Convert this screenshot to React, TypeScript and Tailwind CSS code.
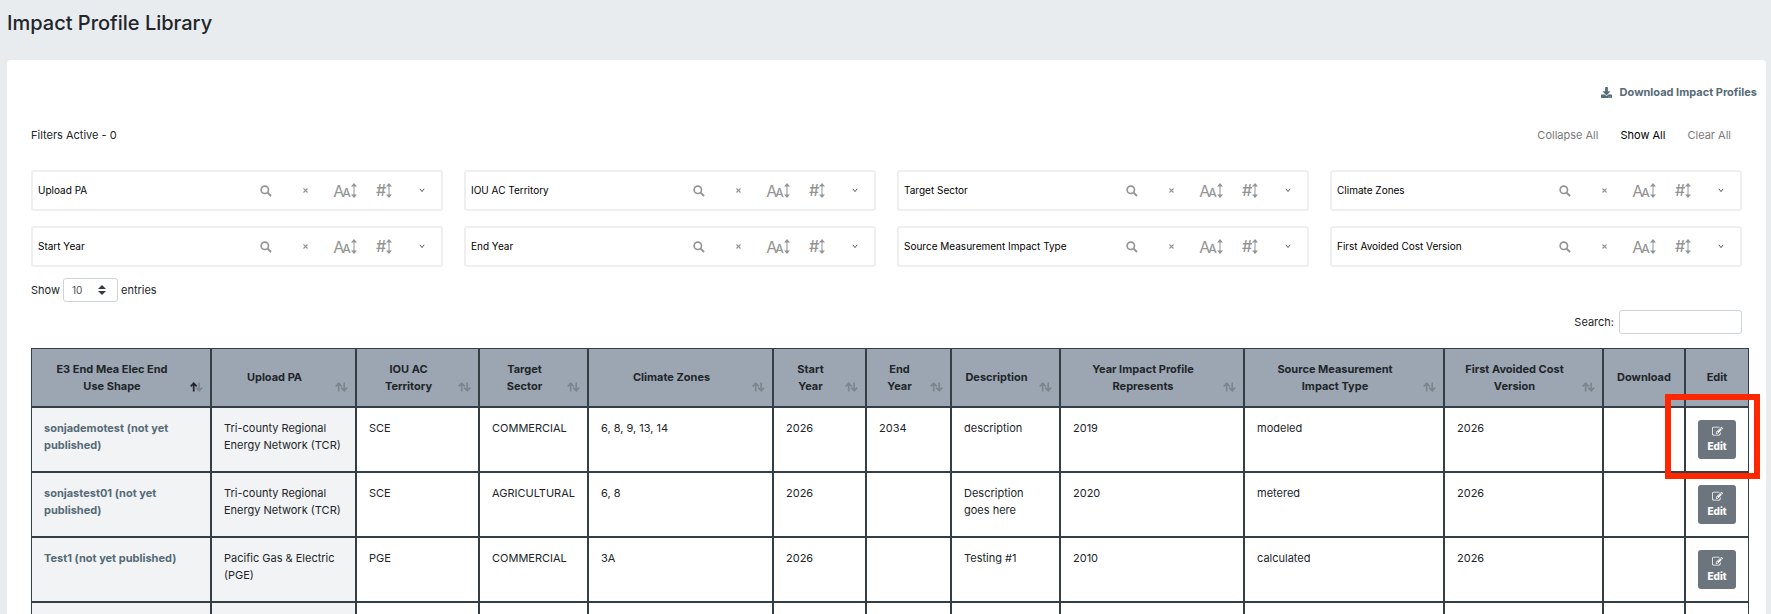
import React, { useState } from "react";
import { FaDownload } from "react-icons/fa";

const filters = [
    "Upload PA",
    "IOU AC Territory",
    "Target Sector",
    "Climate Zones",
    "Start Year",
    "End Year",
    "Source Measurement Impact Type",
    "First Avoided Cost Version",
]

const columns = [
    { label: "E3 End Mea Elec End\nUse Shape", width: "w-[180px]", sort: "asc" },
    { label: "Upload PA", width: "w-[145px]", sort: "none" },
    { label: "IOU AC\nTerritory", width: "w-[123px]", sort: "none" },
    { label: "Target\nSector", width: "w-[109px]", sort: "none" },
    { label: "Climate Zones", width: "w-[185px]", sort: "none" },
    { label: "Start\nYear", width: "w-[93px]", sort: "none" },
    { label: "End\nYear", width: "w-[85px]", sort: "none" },
    { label: "Description", width: "w-[109px]", sort: "none" },
    { label: "Year Impact Profile\nRepresents", width: "w-[184px]", sort: "none" },
    { label: "Source Measurement\nImpact Type", width: "w-[200px]", sort: "none" },
    { label: "First Avoided Cost\nVersion", width: "w-[159px]", sort: "none" },
    { label: "Download", width: "w-[82px]", sort: "" },
    { label: "Edit", width: "w-[64px]", sort: "" },
]

const profiles = [
    { name: "sonjademotest (not yet published)", cells: [ "Tri-county Regional Energy Network (TCR)", "SCE", "COMMERCIAL", "6, 8, 9, 13, 14", "2026", "2034", "description", "2019", "modeled", "2026", "" ] },
    { name: "sonjastest01 (not yet published)", cells: [ "Tri-county Regional Energy Network (TCR)", "SCE", "AGRICULTURAL", "6, 8", "2026", "", "Description goes here", "2020", "metered", "2026", "" ] },
    { name: "Test1 (not yet published)", cells: [ "Pacific Gas & Electric (PGE)", "PGE", "COMMERCIAL", "3A", "2026", "", "Testing #1", "2010", "calculated", "2026", "" ] },
    { name: "", cells: [ "", "", "", "", "", "", "", "", "", "", "" ] },
]

const UpDownIcon = () => (
    <svg width="6" height="15" viewBox="0 0 6 15" fill="#949494" aria-hidden="true">
        <path d="M3 0L6 3.5H0zM3 15L0 11.5h6z" />
        <path d="M2.5 3h1v9h-1z" />
    </svg>
)

const SortIcon = ( { sort }: { sort: string } ) => (
    <svg className="absolute right-[7px] bottom-3.5" width="13" height="10" viewBox="0 0 13 10" fill="none" strokeWidth="1.7" aria-hidden="true">
        <path d="M9.2 0.5v8.2M6.2 5.7l3 3 3-3" stroke="#7b868f" />
        <path d="M3.7 9.5V1.3M0.7 4.3l3-3 3 3" stroke={ sort === "asc" ? "#212529" : "#7b868f" } />
    </svg>
)

const EditIcon = () => (
    <svg width="11" height="11" viewBox="0 0 1792 1792" fill="currentColor" aria-hidden="true">
        <path d="M888 1184l116-116-152-152-116 116v56h96v96h56zm440-720q-16-16-33 1l-350 350q-17 17-1 33t33-1l350-350q17-17 1-33zm80 594v190q0 119-84.5 203.5t-203.5 84.5h-832q-119 0-203.5-84.5t-84.5-203.5v-832q0-119 84.5-203.5t203.5-84.5h832q63 0 117 25 15 7 18 23 3 17-9 29l-49 49q-14 14-32 8-23-6-45-6h-832q-66 0-113 47t-47 113v832q0 66 47 113t113 47h832q66 0 113-47t47-113v-126q0-13 9-22l64-64q15-15 35-7t20 29zm-96-738l288 288-672 672h-288v-288zm444 132l-92 92-288-288 92-92q28-28 68-28t68 28l152 152q28 28 28 68t-28 68z" />
    </svg>
)

const FilterPane = ( { label }: { label: string } ) => (
    <div className="flex h-[41px] items-center rounded-[3px] border-2 border-[#efefef] text-[#949494]">
        <span className="min-w-0 flex-1 truncate pl-[5px] text-[10px] text-black">{ label }</span>
        <button type="button" aria-label={ "Search " + label } className="flex w-[38px] justify-center">
            <svg width="12" height="12" viewBox="0 0 12 12" fill="none" stroke="currentColor" aria-hidden="true">
                <circle cx="4.8" cy="4.8" r="3.7" strokeWidth="1.6" />
                <path d="M7.6 7.6l3.4 3.4" strokeWidth="2" />
            </svg>
        </button>
        <button type="button" aria-label={ "Clear " + label } className="flex w-10 justify-center">
            <svg width="5" height="5" viewBox="0 0 5 5" stroke="currentColor" strokeWidth="1.1" aria-hidden="true">
                <path d="M0.5 0.5l4 4M4.5 0.5l-4 4" />
            </svg>
        </button>
        <button type="button" aria-label={ "Sort " + label + " by name" } className="flex w-10 items-center justify-center">
            <span className="text-[16px] leading-4">A</span>
            <span className="-ml-0.5 pt-1 text-[12px] leading-3 font-medium">A</span>
            <UpDownIcon />
        </button>
        <button type="button" aria-label={ "Sort " + label + " by count" } className="flex w-[38px] items-center justify-center">
            <span className="pb-0.5 text-[16px] leading-4 font-medium">#</span>
            <UpDownIcon />
        </button>
        <button type="button" aria-label={ "Expand " + label } className="flex w-[38px] justify-center">
            <svg width="6" height="5" viewBox="0 0 6 5" fill="none" stroke="#555" strokeWidth="1" aria-hidden="true">
                <path d="M0.8 0.8L3 3.6 5.2 0.8" />
            </svg>
        </button>
    </div>
)

const App = () =>
{
    const [ length, setLength ] = useState( "10" )
    const [ search, setSearch ] = useState( "" )

    return (
        <div className="h-screen overflow-hidden bg-[#e8ecef] pr-[5px] pl-[7px] font-['Inter',sans-serif] text-[11px] leading-[17px] text-[#212529]">
            <h1 className="h-[60px] pt-[9px] text-[20px] leading-7 font-medium">Impact Profile Library</h1>
            <main className="rounded-t-[4px] bg-white pt-6">
                <div className="flex justify-end pr-[9px]">
                    <a href="#download" className="flex items-center gap-2 font-bold text-[#566b78]">
                        <FaDownload className="size-[11px]" />
                        Download Impact Profiles
                    </a>
                </div>
                <div className="px-6">
                    <div className="flex items-center justify-between pt-[25px]">
                        <span>Filters Active - 0</span>
                        <div className="flex gap-[22px] pt-px pr-[11px] text-[#7a7a7a]">
                            <button type="button">Collapse All</button>
                            <button type="button" className="text-black">Show All</button>
                            <button type="button">Clear All</button>
                        </div>
                    </div>
                    <div className="grid grid-cols-4 gap-x-[21px] gap-y-[15px] pt-[26px]">
                        { filters.map( label => <FilterPane key={ label } label={ label } /> ) }
                    </div>
                    <div className="flex items-center gap-[3px] pt-[11px]">
                        <label htmlFor="length">Show</label>
                        <div className="relative">
                            <select id="length" value={ length } onChange={ ( e ) => setLength( e.target.value ) } className="block h-6 w-[55px] appearance-none rounded-[3px] border border-[#ced4da] bg-white pl-2 text-[10px] text-[#495057]">
                                <option>10</option>
                                <option>25</option>
                                <option>50</option>
                            </select>
                            <svg className="pointer-events-none absolute top-[7px] right-3" width="8" height="10" viewBox="0 0 4 5" fill="#343a40" aria-hidden="true">
                                <path d="M2 0L0 2h4zm0 5L0 3h4z" />
                            </svg>
                        </div>
                        <span>entries</span>
                    </div>
                    <div className="flex items-center justify-end gap-[5px] pt-2">
                        <label htmlFor="search">Search:</label>
                        <input id="search" type="search" value={ search } onChange={ ( e ) => setSearch( e.target.value ) } className="h-6 w-[123px] rounded-[3px] border border-[#ced4da] px-2" />
                    </div>
                </div>
                <div className="pt-3.5 pr-[17px] pl-6">
                    <table className="w-full table-fixed border-separate border-spacing-0">
                        <thead>
                            <tr>
                                { columns.map( col => (
                                    <th key={ col.label } className={ `relative h-[59px] border border-[#343f45] bg-[#9ba6b2] py-0 pl-3 text-center align-middle font-bold whitespace-pre-line ${ col.width } ${ col.sort ? "pr-[30px]" : "pr-3" }` }>
                                        { col.label }
                                        { col.sort && <SortIcon sort={ col.sort } /> }
                                    </th>
                                ) ) }
                            </tr>
                        </thead>
                        <tbody>
                            { profiles.map( ( row, i ) => (
                                <tr key={ i } className="align-top">
                                    <td className="h-[65px] border border-[#343f45] bg-[#f1f3f5] p-3 font-bold">
                                        <a href="#profile" className="text-[#566b78]">{ row.name }</a>
                                    </td>
                                    { row.cells.map( ( cell, j ) => (
                                        <td key={ j } className={ `border border-[#343f45] py-3 pr-2 pl-3 ${ j === 0 ? "bg-[#f1f3f5]" : "bg-white" }` }>{ cell }</td>
                                    ) ) }
                                    <td className="relative border border-[#343f45] p-3">
                                        { row.name && (
                                            <button type="button" className="flex h-[39px] w-full flex-col items-center gap-0.5 rounded-[3px] bg-[#6c757d] pt-[6px] text-[10px] leading-[15px] font-extrabold text-white">
                                                <EditIcon />
                                                Edit
                                            </button>
                                        ) }
                                        { i === 0 && <div className="pointer-events-none absolute -top-3.5 -left-[21px] z-10 h-[85px] w-[95px] border-6 border-[#ff2600]" /> }
                                    </td>
                                </tr>
                            ) ) }
                        </tbody>
                    </table>
                </div>
            </main>
        </div>
    );
};

export default App;
